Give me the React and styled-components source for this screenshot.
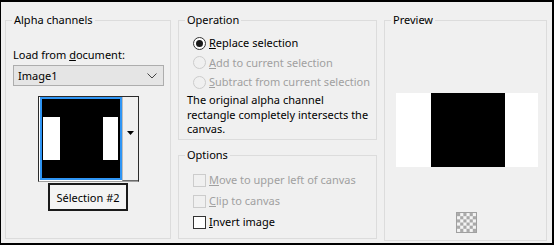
import React from 'react';
import styled, { createGlobalStyle } from 'styled-components';

const GlobalStyle = createGlobalStyle`
    html, body {
        margin: 0;
        padding: 0;
        background: #ffffff;
    }
    body {
        font-family: "Noto Sans", "Open Sans", sans-serif;
        font-size: 11px;
        color: #000;
    }
`

function Thumb() {
    return (
        <svg width="78" height="79" viewBox="0 0 78 79">
            <rect x="0" y="0" width="78" height="79" fill="#000" />
            <rect x="1" y="18" width="17" height="43" fill="#fff" />
            <rect x="61" y="18" width="15" height="43" fill="#fff" />
        </svg>
    )
}

function Checker() {
    const cells = [];
    for (let r = 0; r < 6; r++) {
        for (let c = 0; c < 6; c++) {
            if ((r + c) % 2 === 0) cells.push(<rect key={r + '-' + c} x={1 + c * 3} y={1 + r * 3} width="3" height="3" fill="#a9a9a9" />);
        }
    }
    return (
        <svg width="21" height="21" viewBox="0 0 20 20">
            <rect x="0.5" y="0.5" width="19" height="19" fill="#f4f4f4" stroke="#a0a0a0" />
            {cells}
        </svg>
    )
}

function App() {
    return (
        <>
            <GlobalStyle />
            <Window>
                <Group width="166px">
                    <Legend>Alpha channels</Legend>
                    <FieldLabel>Load from <u>d</u>ocument:</FieldLabel>
                    <Select>
                        <span>Image1</span>
                        <svg width="10" height="6" viewBox="0 0 10 6">
                            <path d="M0.5 0.5 L5 5 L9.5 0.5" fill="none" stroke="#444" strokeWidth="1" />
                        </svg>
                    </Select>
                    <ThumbBox>
                        <ThumbImage><Thumb /></ThumbImage>
                        <ThumbArrow>
                            <svg width="7" height="4" viewBox="0 0 7 4">
                                <path d="M0 0 L7 0 L3.5 4 Z" fill="#000" />
                            </svg>
                        </ThumbArrow>
                    </ThumbBox>
                    <ThumbLabel>Sélection #2</ThumbLabel>
                </Group>
                <Column>
                    <Group height="128px">
                        <Legend>Operation</Legend>
                        <OptionList>
                            <Row><Radio checked /><RowText><u>R</u>eplace selection</RowText></Row>
                            <Row><Radio disabled /><RowText disabled><u>A</u>dd to current selection</RowText></Row>
                            <Row><Radio disabled /><RowText disabled><u>S</u>ubtract from current selection</RowText></Row>
                        </OptionList>
                        <Note>
                            The original alpha channel<br />
                            rectangle completely intersects the<br />
                            canvas.
                        </Note>
                    </Group>
                    <Group grow>
                        <Legend>Options</Legend>
                        <CheckList>
                            <Row><Check disabled /><RowText disabled><u>M</u>ove to upper left of canvas</RowText></Row>
                            <Row><Check disabled /><RowText disabled><u>C</u>lip to canvas</RowText></Row>
                            <Row><Check /><RowText><u>I</u>nvert image</RowText></Row>
                        </CheckList>
                    </Group>
                </Column>
                <Group width="163px" tall>
                    <Legend>Preview</Legend>
                    <PreviewArea>
                        <PreviewImage>
                            <PreviewBlack />
                        </PreviewImage>
                        <Checker />
                    </PreviewArea>
                </Group>
            </Window>
        </>
    )
}

export default App

const Window = styled.div`
    box-sizing: border-box;
    width: 554px;
    height: 245px;
    background: #f0f0f0;
    border-style: solid;
    border-color: #000;
    border-width: 2px 2px 2px 1px;
    padding: 10px 5px 4px 4px;
    display: flex;
    gap: 7px;
    align-items: stretch;
`
const Group = styled.fieldset`
    box-sizing: border-box;
    margin: 0;
    padding: 0;
    min-width: 0;
    border: 1px solid #dcdcdc;
    width: ${props => props.width || 'auto'};
    height: ${props => props.height || 'auto'};
    flex: ${props => props.grow ? '1' : 'none'};
    margin-bottom: ${props => props.tall ? '-2px' : '0'};
    display: flex;
    flex-direction: column;
`
const Legend = styled.legend`
    margin-left: 6px;
    padding: 0 2px;
    line-height: 16px;
    height: 16px;
`
const Column = styled.div`
    width: 199px;
    display: flex;
    flex-direction: column;
    gap: 7px;
`
const FieldLabel = styled.div`
    margin: 19px 0 0 7px;
    line-height: 16px;
`
const Select = styled.div`
    box-sizing: border-box;
    margin: 2px 0 0 7px;
    width: 151px;
    height: 21px;
    background: #e5e5e5;
    border: 1px solid #adadad;
    display: flex;
    align-items: center;
    justify-content: space-between;
    padding: 0 6px 0 4px;
    line-height: 16px;
`
const ThumbBox = styled.div`
    box-sizing: border-box;
    margin: 10px 0 0 32px;
    width: 101px;
    height: 86px;
    border: 1px solid #2b2b2b;
    border-bottom-color: #a0a0a0;
    background: #ffffff;
    display: flex;
    align-items: flex-start;
    padding: 0 0 0 1px;
`
const ThumbImage = styled.div`
    width: 78px;
    height: 79px;
    border: 2px solid #2f95f4;
    line-height: 0;
`
const ThumbArrow = styled.div`
    box-sizing: border-box;
    width: 17px;
    height: 84px;
    background: #f0f0f0;
    border-left: 1px solid #bdbdbd;
    border-bottom: 1px solid #6b6b6b;
    display: flex;
    align-items: center;
    justify-content: center;
    padding-bottom: 12px;
`
const ThumbLabel = styled.div`
    box-sizing: border-box;
    margin: 1px 0 0 42px;
    width: 80px;
    height: 28px;
    border: 2px solid #1a1a1a;
    background: #f4f4f4;
    display: flex;
    align-items: center;
    justify-content: center;
`
const OptionList = styled.div`
    margin: 7px 0 0 14px;
    display: flex;
    flex-direction: column;
    gap: 3.5px;
`
const CheckList = styled.div`
    margin: 9px 0 0 14px;
    display: flex;
    flex-direction: column;
    gap: 5px;
`
const Row = styled.div`
    display: flex;
    align-items: center;
    height: 16px;
`
const Radio = styled.span`
    box-sizing: border-box;
    flex-shrink: 0;
    width: 13px;
    height: 13px;
    border-radius: 50%;
    border: 1px solid ${props => props.disabled ? '#cccccc' : '#333333'};
    background: ${props => props.disabled ? '#f0f0f0' : '#ffffff'};
    display: flex;
    align-items: center;
    justify-content: center;
    &::after {
        content: '';
        display: ${props => props.checked ? 'block' : 'none'};
        width: 7px;
        height: 7px;
        border-radius: 50%;
        background: #1a1a1a;
    }
`
const Check = styled.span`
    box-sizing: border-box;
    flex-shrink: 0;
    width: 13px;
    height: 13px;
    border: 1px solid ${props => props.disabled ? '#cccccc' : '#333333'};
    background: ${props => props.disabled ? '#f0f0f0' : '#ffffff'};
`
const RowText = styled.span`
    margin-left: 3px;
    line-height: 16px;
    color: ${props => props.disabled ? '#a0a0a0' : '#000000'};
    white-space: nowrap;
`
const Note = styled.div`
    margin: 3px 0 0 8px;
    line-height: 14.5px;
    white-space: nowrap;
`
const PreviewArea = styled.div`
    display: flex;
    flex-direction: column;
    align-items: center;
    padding-top: 65px;
    gap: 45px;
    padding-left: 2px;
`
const PreviewImage = styled.div`
    width: 142px;
    height: 74px;
    background: #ffffff;
    display: flex;
    padding-left: 35px;
    box-sizing: border-box;
`
const PreviewBlack = styled.div`
    width: 74px;
    height: 74px;
    background: #000000;
`
